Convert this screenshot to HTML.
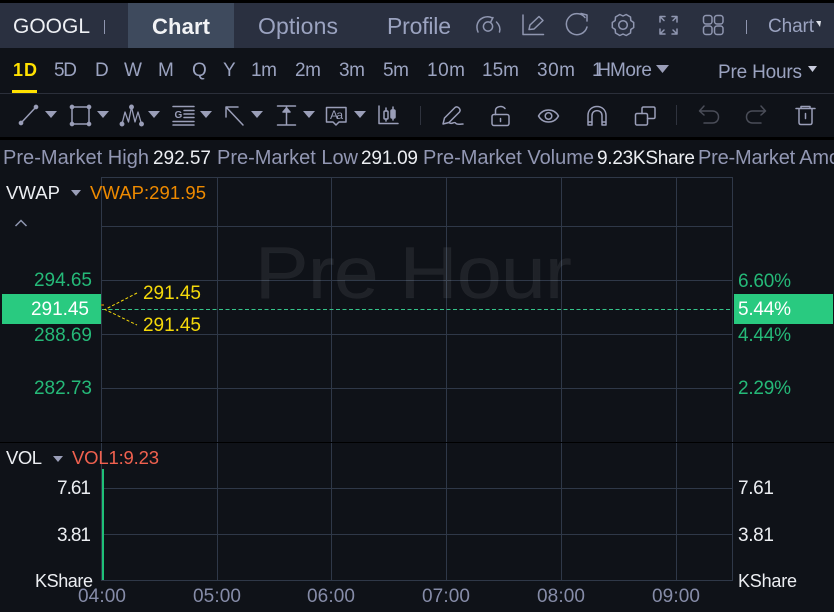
<!DOCTYPE html>
<html><head><meta charset="utf-8"><style>
html,body{margin:0;padding:0;background:#000;width:834px;height:612px;overflow:hidden}
svg{display:block}
text{font-family:"Liberation Sans",sans-serif;white-space:pre}
.h{font-size:23px;fill:#9ba3c0}
.t{font-size:19px;fill:#9ba3c0}
.i{font-size:20px;fill:#9297b3}
.w{font-size:19px;fill:#eceef2}
.v{font-size:18.500px;fill:#eceef2}
.k{font-size:18px;fill:#eceef2}
.g{font-size:19px;fill:#25b978}
.y{font-size:19px;fill:#f5d90a}
.x{font-size:19px;fill:#868ca8}
.ic{fill:none;stroke:#9a9eb8;stroke-width:1.500;stroke-linecap:round;stroke-linejoin:round}
.ih{fill:none;stroke:#8f96b0;stroke-width:1.500;stroke-linecap:round;stroke-linejoin:round}
.tri{fill:#9a9eb8}
</style></head><body>
<svg width="834" height="612" viewBox="0 0 834 612" xmlns="http://www.w3.org/2000/svg">
<rect width="834" height="612" fill="#0f1218"/>
<rect width="834" height="3" fill="#000"/>
<rect y="3" width="834" height="45" fill="#2a3040"/>
<rect x="128" y="3" width="106" height="45" fill="#3e4a5d"/>
<text x="13" y="33" font-size="21" fill="#eef0f4" textLength="77">GOOGL</text>
<rect x="104" y="20" width="1" height="14" fill="#8f96b0"/>
<text x="152" y="34" font-size="22" font-weight="700" fill="#f2f3f5" textLength="58">Chart</text>
<text x="258" y="34" class="h" textLength="80">Options</text>
<text x="387" y="34" class="h" textLength="64">Profile</text>

<!-- header icons -->
<g class="ih">
<path d="M478 32C475.500 26 477.500 20 483.500 17.500C486.500 16.500 489.500 16.500 492 17.800"/><path d="M496.500 22C499.500 25 500.500 28.500 499.500 32"/>
<circle cx="488" cy="26.500" r="4.600"/><path d="M490.500 22.500L493 17.500"/>
<path d="M523 15V34.500H543.500"/><path d="M529 29.500L530 25L539 16.500L543 20.500L534 29Z"/>
<path d="M587 27A10.500 10.500 0 1 1 585 17.500"/><path d="M581 13.500L587 15L587 21"/>
<path d="M633.700 22.500L630.800 20.500L630.500 17L626.200 14.500L623 16L619.800 14.500L615.500 17L615.200 20.500L612.300 22.500V27.500L615.200 29.500L615.500 33L619.800 35.500L623 34L626.200 35.500L630.500 33L630.800 29.500L633.700 27.500Z"/>
<circle cx="623" cy="25" r="4.300"/>
<path d="M660 22V16.500H665M660 16.500L664 20.500M677 22V16.500H672M677 16.500L673 20.500M660 29V34H665M660 34L664 30M677 29V34H672M677 34L673 30"/>
<rect x="703.500" y="15.500" width="8.500" height="8.500" rx="2.500"/><rect x="714.500" y="15.500" width="8.500" height="8.500" rx="2.500"/>
<rect x="703.500" y="26" width="8.500" height="8.500" rx="2.500"/><rect x="714.500" y="26" width="8.500" height="8.500" rx="2.500"/>
</g>
<rect x="746" y="20" width="1" height="14" fill="#8f96b0"/>
<text x="768" y="32" font-size="19" fill="#9ba3c0" textLength="46">Chart</text>
<path d="M816 21H821L820 27Z" fill="#dfe2ea"/>

<!-- period row -->
<text x="13" y="76" font-size="18" font-weight="700" fill="#ffe100" textLength="24">1D</text>
<rect x="12" y="90" width="25" height="3" fill="#ffe100"/>
<text x="54" y="76" class="t" textLength="23">5D</text>
<text x="95" y="76" class="t" textLength="13">D</text>
<text x="124" y="76" class="t" textLength="18">W</text>
<text x="158" y="76" class="t" textLength="18">M</text>
<text x="192" y="76" class="t" textLength="15">Q</text>
<text x="223" y="76" class="t" textLength="12">Y</text>
<text x="251" y="76" class="t" textLength="26">1m</text>
<text x="295" y="76" class="t" textLength="26">2m</text>
<text x="339" y="76" class="t" textLength="26">3m</text>
<text x="383" y="76" class="t" textLength="26">5m</text>
<text x="427" y="76" class="t" textLength="38">10m</text>
<text x="482" y="76" class="t" textLength="37">15m</text>
<text x="537" y="76" class="t" textLength="38">30m</text>
<text x="592" y="76" class="t" textLength="19">1H</text>
<text x="610" y="76" class="t" textLength="42">More</text>
<path d="M656 65H669L662.500 73Z" class="tri"/>
<text x="718" y="78" class="t" textLength="84">Pre Hours</text>
<path d="M808 66H817L812.500 72Z" fill="#c8cbdc"/>
<rect y="93" width="834" height="1" fill="#2b2f3a"/>

<!-- toolbar -->
<g class="ic">
<path d="M21 123L36 107"/><circle cx="21" cy="123" r="1.600" fill="#9a9eb8"/><circle cx="36" cy="107" r="1.600" fill="#9a9eb8"/>
<rect x="72" y="107" width="17" height="17"/>
<g fill="#9a9eb8"><circle cx="72" cy="107" r="1.600"/><circle cx="89" cy="107" r="1.600"/><circle cx="72" cy="124" r="1.600"/><circle cx="89" cy="124" r="1.600"/></g>
<path d="M122 124L125 112L128.500 122L131.500 107L135 122L138 112L141.500 124" stroke-width="1.300"/>
<g fill="#9a9eb8"><circle cx="122" cy="124" r="1.700"/><circle cx="131.500" cy="107" r="1.700"/><circle cx="141.500" cy="124" r="1.700"/></g>
<path d="M173 106.500H194M184 110.500H194M184 114H194M184 117.500H194M173 121.500H194M173 125H194"/>
<path d="M226 107V117M226 107H238M226 107L243 125"/>
<path d="M277.500 106H295.500M277.500 125H295.500M286.500 106V125"/>
<path d="M283 112L286.500 108L290 112Z" fill="#9a9eb8"/>
<path d="M326.500 107.500H346V122H339L336 125L333 122H326.500Z"/>
<path d="M379 106V123.500H398"/>
<rect x="384" y="111" width="4" height="8" rx="1"/><path d="M386 108V111M386 119V121"/>
<rect x="391" y="110" width="4" height="8" rx="1" fill="#9a9eb8"/><path d="M393 107V110M393 118V120"/>

<path d="M443 124L444.500 118L455 107.500C456.500 106.500 458 107 459 108C460 109 460.500 110.500 459.500 112L449 122.500Z"/><path d="M449 122.500C452 125.500 454 120.500 456 123.500C457.500 125 461 124 463 124"/>
<rect x="492" y="114.500" width="17" height="11" rx="2"/><path d="M495.500 114.500V110.500C495.500 106.500 502 105 505 108.500"/><path d="M500.500 118.500V121.500"/>
<path d="M538.500 116C543 108 554 108 558.500 116C554 124 543 124 538.500 116Z"/><circle cx="548.500" cy="116" r="3.300"/>
<path d="M588 125V115.500C588 103.500 606 103.500 606 115.500V125H602V115.500C602 109 592 109 592 115.500V125ZM588 122H592M602 122H606"/>
<rect x="635.500" y="113.500" width="12" height="11.500" rx="1.500"/>
<path d="M642 113.500V108.500Q642 107 643.500 107H653.500Q655 107 655 108.500V117Q655 118.500 653.500 118.500H647.500"/>
<path d="M796 108.500H815M801 108.500V106.500H810V108.500M799 108.500V122.500Q799 124.500 801 124.500H810Q812 124.500 812 122.500V108.500M805.500 113.500V118.500"/>
</g>
<g class="ic" style="stroke:#4a4d58">
<path d="M704 106L699.500 111L704 115M700 111H712.500C716 111 718.500 113.500 718.500 117C718.500 120.500 716 123 712.500 123H704"/>
<path d="M761 106L765.500 111L761 115M765 111H752.500C749 111 746.500 113.500 746.500 117C746.500 120.500 749 123 752.500 123H761"/>
</g>
<rect x="420" y="106" width="1" height="19" fill="#2f333e"/>
<rect x="676" y="105" width="1" height="20" fill="#2f333e"/>
<text x="330" y="119" font-size="12" fill="#9a9eb8" textLength="13">Aa</text>
<text x="174.500" y="118" font-size="10" font-weight="700" fill="#9a9eb8">G</text>
<g class="tri">
<path d="M45 111H57L51 118Z"/><path d="M97 111H109L103 118Z"/><path d="M148 111H160L154 118Z"/><path d="M200 111H212L206 118Z"/><path d="M251 111H263L257 118Z"/><path d="M303 111H315L309 118Z"/><path d="M354 111H366L360 118Z"/>
</g>
<rect y="137" width="834" height="3" fill="#000"/>

<!-- info row -->
<text x="3" y="164" class="i" textLength="146">Pre-Market High</text>
<text x="153" y="164" class="w" textLength="58">292.57</text>
<text x="217" y="164" class="i" textLength="141">Pre-Market Low</text>
<text x="361" y="164" class="w" textLength="57">291.09</text>
<text x="423" y="164" class="i" textLength="171">Pre-Market Volume</text>
<text x="597" y="164" class="w" textLength="98">9.23KShare</text>
<text x="698" y="164" class="i" textLength="142">Pre-Market Amo</text>

<!-- grid -->
<g fill="#2f3848">
<rect x="101" y="177" width="632" height="1"/>
<rect x="101" y="226" width="632" height="1"/>
<rect x="101" y="280" width="632" height="1"/>
<rect x="101" y="334" width="632" height="1"/>
<rect x="101" y="388" width="632" height="1"/>
<rect x="101" y="488" width="632" height="1"/>
<rect x="101" y="534" width="632" height="1"/>
<rect x="101" y="580" width="632" height="1"/>
<rect x="101" y="177" width="1" height="404"/>
<rect x="217" y="177" width="1" height="404"/>
<rect x="331" y="177" width="1" height="404"/>
<rect x="446" y="177" width="1" height="404"/>
<rect x="561" y="177" width="1" height="404"/>
<rect x="676" y="177" width="1" height="404"/>
<rect x="732" y="177" width="1" height="404"/>
</g>
<rect y="442" width="834" height="1" fill="#000"/>
<text transform="translate(255 298) scale(1.1 1)" x="0" y="0" font-size="73" fill="#ffffff" fill-opacity="0.07" stroke="#ffffff" stroke-opacity="0.03" stroke-width="0.500" textLength="288">Pre Hour</text>

<!-- main chart labels -->
<text x="6" y="199" class="v" textLength="54">VWAP</text>
<path d="M71 190H81L76 196Z" class="tri"/>
<text x="90" y="199" font-size="18.500" fill="#ee8a00" textLength="116">VWAP:291.95</text>
<path d="M15.500 226L21 220.500L26.500 226" fill="none" stroke="#8f96b0" stroke-width="1.500"/>
<text x="34" y="286" class="g" textLength="58">294.65</text>
<text x="34" y="341" class="g" textLength="58">288.69</text>
<text x="34" y="394" class="g" textLength="58">282.73</text>
<text x="738" y="287" class="g" textLength="53">6.60%</text>
<text x="738" y="341" class="g" textLength="53">4.44%</text>
<text x="738" y="394" class="g" textLength="53">2.29%</text>
<rect x="2" y="294" width="99" height="30" fill="#29ca80"/>
<rect x="734" y="294" width="99" height="30" fill="#29ca80"/>
<text x="31" y="315" font-size="19" fill="#fff" textLength="58">291.45</text>
<text x="738" y="315" font-size="19" fill="#fff" textLength="53">5.44%</text>
<path d="M102 309.500H732" stroke="#35c48a" stroke-width="1" stroke-dasharray="4 2.500" fill="none"/>
<path d="M137 293L105 309.500L137 325" stroke="#f5d90a" stroke-width="1" stroke-dasharray="3 2" fill="none"/>
<rect x="101" y="304" width="3" height="2" fill="#8a5a10"/>
<text x="143" y="299" class="y" textLength="58">291.45</text>
<text x="143" y="331" class="y" textLength="58">291.45</text>

<!-- volume -->
<text x="6" y="464" class="v" textLength="36">VOL</text>
<path d="M53 456H63L58 462Z" class="tri"/>
<text x="72" y="464" font-size="18.500" fill="#f0614f" textLength="87">VOL1:9.23</text>
<rect x="102" y="469" width="2" height="111" fill="#1fc077"/>
<text x="57" y="494" class="w" textLength="34">7.61</text>
<text x="57" y="541" class="w" textLength="34">3.81</text>
<text x="35" y="587" class="k" textLength="58">KShare</text>
<text x="738" y="494" class="w" textLength="36">7.61</text>
<text x="738" y="541" class="w" textLength="36">3.81</text>
<text x="738" y="587" class="k" textLength="59">KShare</text>
<text x="78" y="602" class="x" textLength="48">04:00</text>
<text x="193" y="602" class="x" textLength="48">05:00</text>
<text x="307" y="602" class="x" textLength="48">06:00</text>
<text x="422" y="602" class="x" textLength="48">07:00</text>
<text x="537" y="602" class="x" textLength="48">08:00</text>
<text x="652" y="602" class="x" textLength="48">09:00</text>
</svg>
</body></html>
